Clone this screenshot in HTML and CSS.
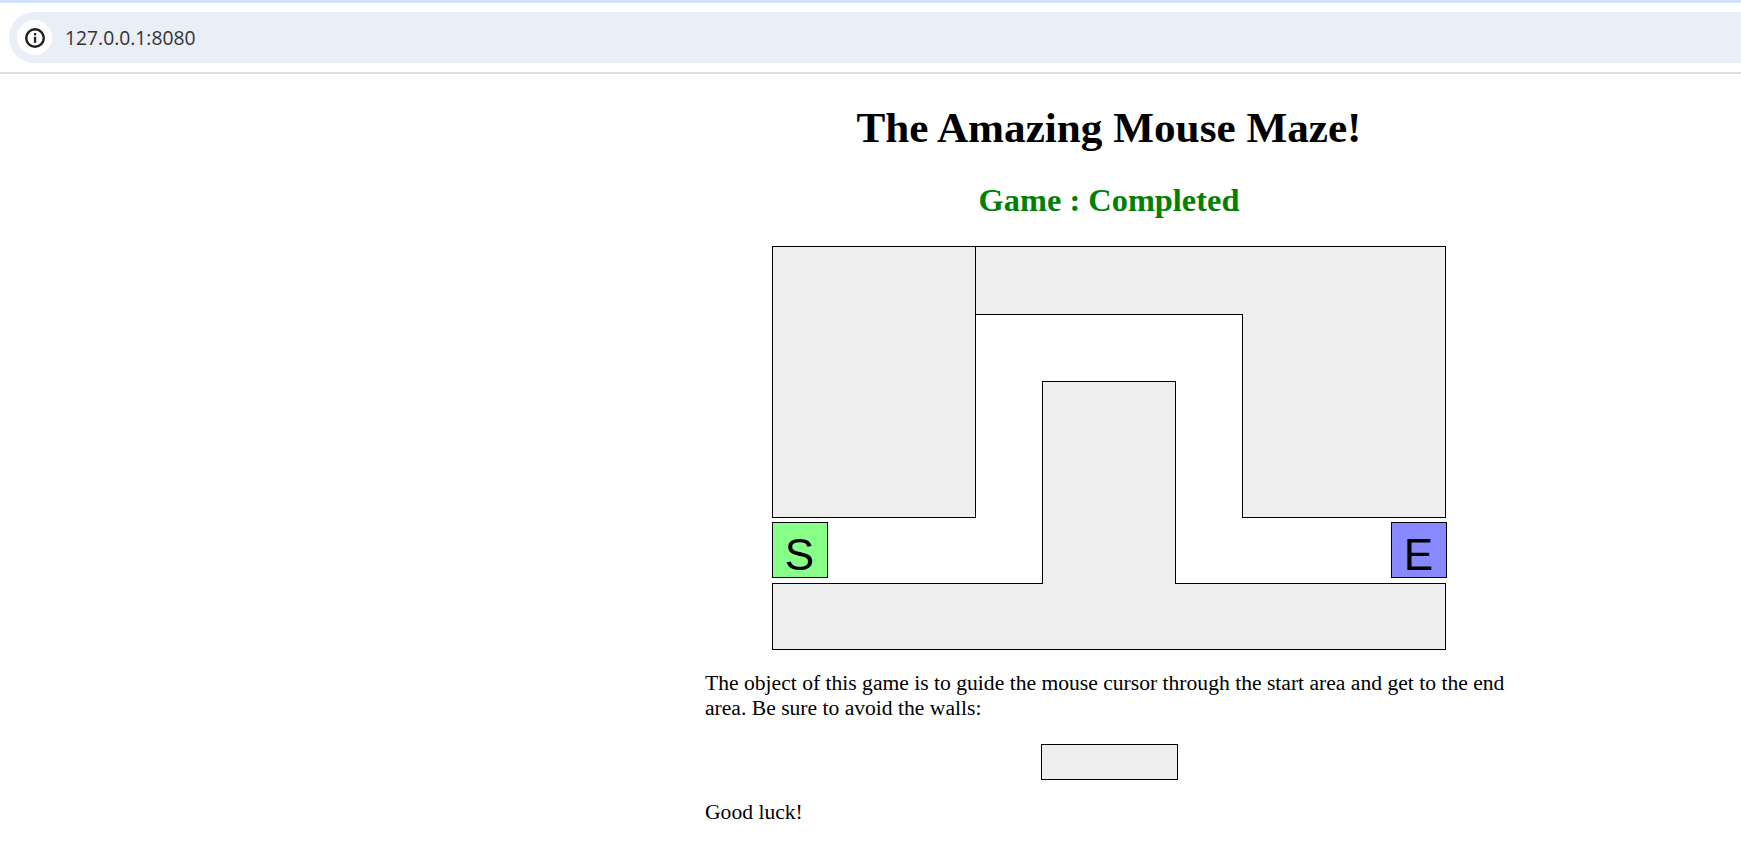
FILE: index.html
```html
<!DOCTYPE html>
<html lang="en">
<head>
<meta charset="utf-8">
<title>The Amazing Mouse Maze!</title>
<link rel="stylesheet" href="styles.css">
</head>
<body>
<!-- browser address bar -->
<div class="toolbar">
  <div class="addressbar">
    <span class="siteinfo">
      <svg width="22" height="22" viewBox="0 0 22 22">
        <circle cx="11" cy="11" r="8.8" fill="none" stroke="#1f1f1f" stroke-width="2.4"/>
        <rect x="9.9" y="9.8" width="2.3" height="6" fill="#1f1f1f"/>
        <rect x="9.9" y="6.1" width="2.3" height="2.3" fill="#1f1f1f"/>
      </svg>
    </span>
    <span class="url">127.0.0.1:8080</span>
  </div>
</div>

<div class="content">
  <h1>The Amazing Mouse Maze!</h1>
  <h2 class="status">Game : Completed</h2>

  <!-- walls and start/end squares are placed on the maze itself -->
  <div class="maze">
    <div class="wall wall-left"></div>
    <div class="wall wall-top"></div>
    <div class="wall wall-right"></div>
    <div class="wall wall-bottom"></div>
    <div class="wall wall-center"></div>
    <div class="square start">S</div>
    <div class="square end">E</div>
  </div>

  <p class="intro">The object of this game is to guide the mouse cursor through the start area and get to the end area. Be sure to avoid the walls:</p>
  <div class="wall sample"></div>
  <p class="luck">Good luck!</p>
</div>
</body>
</html>
```

FILE: styles.css
```css
body {
  margin: 0;
  background-color: white;
  font-family: "Liberation Serif", serif;
  color: black;
}

/* browser address bar */
.toolbar {
  height: 74px;
  box-sizing: border-box;
  padding: 9px 0 9px 9px;
  background-color: white;
  border-top: 3px solid #d3e3fd;
  border-bottom: 2px solid #dfdfdf;
}
.addressbar {
  display: flex;
  align-items: center;
  height: 51px;
  padding-left: 8px;
  gap: 13px;
  background-color: #eaeef7;
  border-radius: 26px 0 0 26px;
}
.siteinfo {
  display: flex;
  align-items: center;
  justify-content: center;
  width: 35px;
  height: 35px;
  background-color: white;
  border-radius: 50%;
}
.url {
  font-family: "Open Sans", sans-serif;
  font-size: 19.3px;
  color: #333;
}

/* page content */
.content {
  width: 808px;
  margin-left: 705px;
}
h1 {
  margin: 0;
  padding-top: 29px;
  font-size: 43.2px;
  line-height: 50px;
  text-align: center;
}
.status {
  margin: 29px 0 0;
  font-size: 32.4px;
  line-height: 36px;
  text-align: center;
  color: green;
}

.maze {
  position: relative;
  width: 675px;
  height: 404px;
  margin: 28px auto 0;
}
.wall {
  box-sizing: border-box;
  background-color: #eeeeee;
  border: 1px solid black;
}
.maze .wall {
  position: absolute;
}
.wall-left {
  left: 0;
  top: 0;
  width: 204px;
  height: 272px;
}
.wall-top {
  left: 204px;
  top: 0;
  width: 470px;
  height: 69px;
  border-left: none;
}
/* open at the top so it runs into the top wall */
.wall-right {
  left: 470px;
  top: 68px;
  width: 204px;
  height: 204px;
  border-top: none;
}
/* open at the bottom so it runs into the bottom wall */
.wall-center {
  left: 270px;
  top: 135px;
  width: 134px;
  height: 203px;
  border-bottom: none;
}
.wall-bottom {
  left: 0;
  top: 337px;
  width: 674px;
  height: 67px;
}
.square {
  position: absolute;
  top: 276px;
  box-sizing: border-box;
  width: 56px;
  height: 56px;
  border: 1px solid black;
  font-family: "Liberation Sans", sans-serif;
  font-size: 44px;
  line-height: 64px;
  text-align: center;
}
.start {
  left: 0;
  background-color: #88ff88;
}
.end {
  left: 619px;
  background-color: #8888ff;
}

p {
  margin: 0;
  font-size: 21.6px;
  line-height: 25px;
}
.intro {
  margin-top: 21px;
}
.sample {
  width: 137px;
  height: 36px;
  margin: 23px auto 0;
}
.luck {
  margin-top: 20px;
}
```
